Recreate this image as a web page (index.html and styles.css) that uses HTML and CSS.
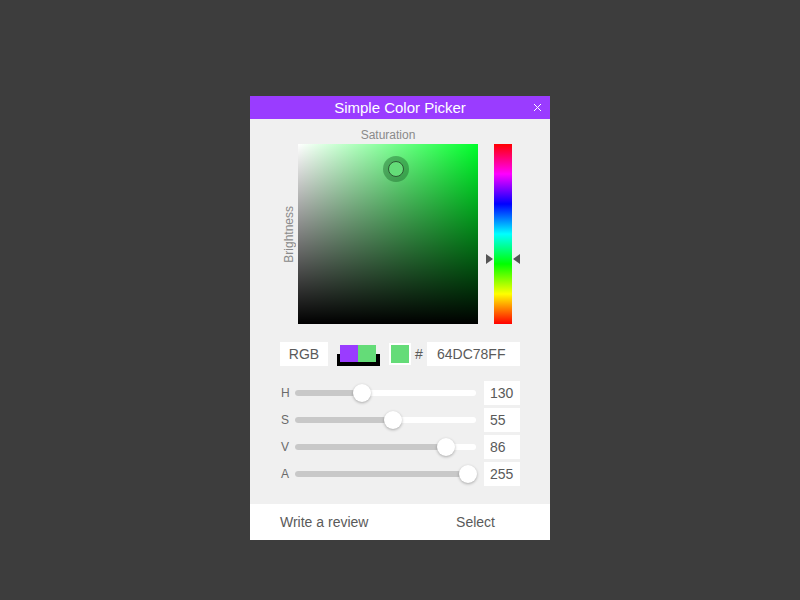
FILE: index.html
```html
<!DOCTYPE html>
<html lang="en">
<head>
  <meta charset="UTF-8">
  <meta name="viewport" content="width=device-width, initial-scale=1.0">
  <title>Simple Color Picker</title>
  <link rel="stylesheet" href="styles.css">
</head>
<body>

  <div class="dialog">
    <div class="header">
      Simple Color Picker
      <span class="close">
        <svg width="9" height="9" viewBox="0 0 9 9"><path d="M1 1L8 8M8 1L1 8" stroke="#fff" stroke-width="1" fill="none"/></svg>
      </span>
    </div>

    <div class="body">
      <div class="picker">
        <div class="bright-col"><span class="bright-label">Brightness</span></div>
        <div class="sv-col">
          <div class="sat-label">Saturation</div>
          <div class="sv-square">
            <div class="sv-white"></div>
            <div class="sv-black"></div>
            <div class="sv-cursor" style="left: 98px; top: 25px;"><span class="sv-dot"></span></div>
          </div>
        </div>
        <div class="hue-col">
          <div class="hue-bar">
            <span class="hue-arrow left" style="top: 115px;"></span>
            <span class="hue-arrow right" style="top: 115px;"></span>
          </div>
        </div>
      </div>

      <div class="color-row">
        <div class="field mode">RGB</div>
        <div class="swatch">
          <span class="swatch-old"></span><span class="swatch-new"></span>
        </div>
        <div class="current"><span class="current-fill"></span></div>
        <span class="hash">#</span>
        <div class="field hex">64DC78FF</div>
      </div>

      <div class="sliders">
        <div class="slider-row">
          <span class="slider-label">H</span>
          <div class="track"><div class="fill" style="width: 67px;"></div><span class="thumb" style="left: 67px;"></span></div>
          <div class="field value">130</div>
        </div>
        <div class="slider-row">
          <span class="slider-label">S</span>
          <div class="track"><div class="fill" style="width: 98px;"></div><span class="thumb" style="left: 98px;"></span></div>
          <div class="field value">55</div>
        </div>
        <div class="slider-row">
          <span class="slider-label">V</span>
          <div class="track"><div class="fill" style="width: 151px;"></div><span class="thumb" style="left: 151px;"></span></div>
          <div class="field value">86</div>
        </div>
        <div class="slider-row">
          <span class="slider-label">A</span>
          <div class="track"><div class="fill" style="width: 173px;"></div><span class="thumb" style="left: 173px;"></span></div>
          <div class="field value">255</div>
        </div>
      </div>
    </div>

    <div class="footer">
      <a href="#">Write a review</a>
      <a href="#">Select</a>
    </div>
  </div>

</body>
</html>
```

FILE: styles.css
```css
* {
  margin: 0;
  padding: 0;
  box-sizing: border-box;
}

body {
  font-family: "Liberation Sans", Arial, sans-serif;
  background-color: #3d3d3d;
  min-height: 100vh;
}

.dialog {
  width: 300px;
  margin: 96px auto 0;
  background-color: #f0f0f0;
}

/* Title bar */
.header {
  position: relative;
  height: 23px;
  line-height: 23px;
  background-color: #9a3cff;
  color: white;
  font-size: 15px;
  text-align: center;
}

.close {
  position: absolute;
  right: 8px;
  top: 7px;
  width: 9px;
  height: 9px;
  line-height: 0;
}

.body {
  padding: 9px 30px 18px;
}

/* Saturation / brightness square + hue bar */
.picker {
  display: flex;
}

.bright-col {
  width: 18px;
  height: 180px;
  margin-top: 16px;
  display: flex;
  align-items: center;
  justify-content: center;
}

.bright-label {
  writing-mode: vertical-rl;
  transform: rotate(180deg);
  font-size: 12px;
  color: #8a8a8a;
}

.sv-col {
  width: 180px;
}

.sat-label {
  height: 16px;
  line-height: 14px;
  font-size: 12px;
  color: #8a8a8a;
  text-align: center;
}

.sv-square {
  position: relative;
  width: 180px;
  height: 180px;
  background-color: #00ff2b;
}

.sv-white {
  position: absolute;
  inset: 0;
  background: linear-gradient(to right, #fff, rgba(255,255,255,0));
}

.sv-black {
  position: absolute;
  inset: 0;
  background: linear-gradient(to bottom, rgba(0,0,0,0), #000);
}

.sv-cursor {
  position: absolute;
  width: 26px;
  height: 26px;
  margin: -13px 0 0 -13px;
  border-radius: 50%;
  background-color: rgba(20, 90, 35, 0.4);
  display: flex;
  align-items: center;
  justify-content: center;
}

.sv-dot {
  width: 16px;
  height: 16px;
  border-radius: 50%;
  border: 1.5px solid #2c5a33;
  background-color: #64dc78;
}

.hue-col {
  margin-left: 16px;
  padding-top: 16px;
}

.hue-bar {
  position: relative;
  width: 18px;
  height: 180px;
  background: linear-gradient(to top, #f00 0%, #ff0 16.67%, #0f0 33.33%, #0ff 50%, #00f 66.67%, #f0f 83.33%, #f00 100%);
}

.hue-arrow {
  position: absolute;
  width: 0;
  height: 0;
  margin-top: -5px;
  border-top: 5px solid transparent;
  border-bottom: 5px solid transparent;
}

.hue-arrow.left {
  left: -8px;
  border-left: 7px solid #555;
}

.hue-arrow.right {
  right: -8px;
  border-right: 7px solid #555;
}

/* Mode / swatches / hex */
.field {
  height: 24px;
  line-height: 24px;
  background-color: white;
  color: #5a5a5a;
  font-size: 14px;
}

.color-row {
  display: flex;
  align-items: center;
  margin-top: 18px;
}

.mode {
  width: 48px;
  text-align: center;
}

.swatch {
  display: flex;
  width: 43px;
  height: 24px;
  margin-left: 9px;
  padding: 3px 0 0 3px;
  background: linear-gradient(to bottom, transparent 12px, #000 12px);
}

.swatch-old,
.swatch-new {
  width: 18px;
  height: 17px;
}

.swatch-old {
  background-color: #9a3cff;
}

.swatch-new {
  background-color: #64dc78;
}

.current {
  width: 22px;
  height: 22px;
  margin-left: 9px;
  padding: 2px;
  background-color: white;
}

.current-fill {
  display: block;
  width: 18px;
  height: 18px;
  background-color: #64dc78;
}

.hash {
  width: 16px;
  text-align: center;
  font-size: 14px;
  color: #5a5a5a;
}

.hex {
  flex: 1;
  padding-left: 10px;
}

/* HSVA sliders */
.sliders {
  display: flex;
  flex-direction: column;
  gap: 3px;
  margin-top: 15px;
}

.slider-row {
  display: flex;
  align-items: center;
}

.slider-label {
  width: 15px;
  padding-left: 1px;
  font-size: 12px;
  color: #6a6a6a;
}

.track {
  position: relative;
  width: 181px;
  height: 6px;
  border-radius: 3px;
  background-color: white;
}

.fill {
  height: 6px;
  border-radius: 3px;
  background-color: #c8c8c8;
}

.thumb {
  position: absolute;
  top: 50%;
  width: 18px;
  height: 18px;
  margin: -9px 0 0 -9px;
  border-radius: 50%;
  background-color: white;
  box-shadow: 0 1px 3px rgba(0,0,0,0.3);
}

.value {
  width: 36px;
  margin-left: 8px;
  padding-left: 6px;
}

/* Footer */
.footer {
  height: 36px;
  background-color: white;
  display: flex;
  align-items: center;
  justify-content: space-between;
  padding: 0 55px 0 30px;
}

.footer a {
  color: #5a5a5a;
  font-size: 14px;
  text-decoration: none;
}
```
